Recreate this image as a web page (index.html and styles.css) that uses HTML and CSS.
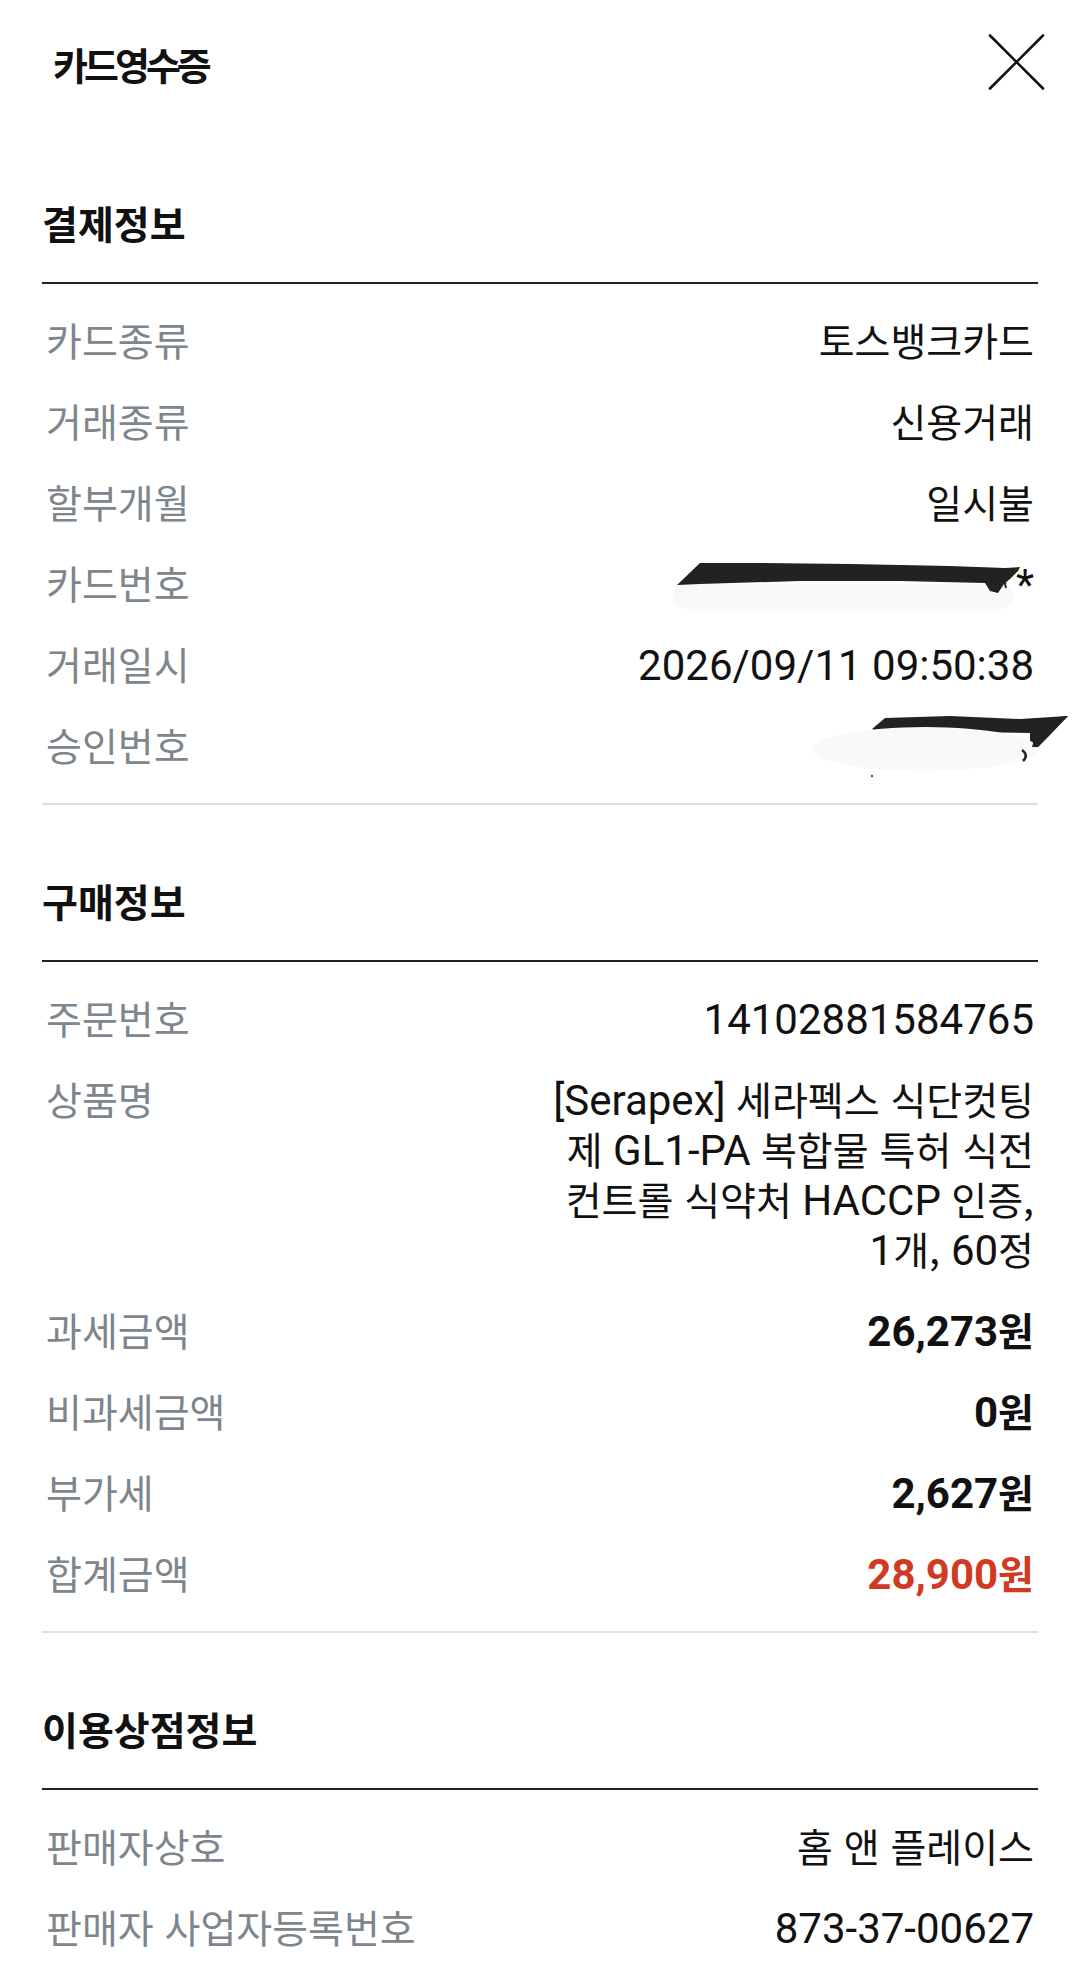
FILE: index.html
```html
<!DOCTYPE html>
<html lang="ko">
<head>
  <meta charset="UTF-8" />
  <meta name="viewport" content="width=device-width, initial-scale=1.0"/>
  <title>카드영수증</title>
  <link rel="stylesheet" href="styles.css">
</head>
<body>
  <header class="top">
    <h1 class="top-title">카드영수증</h1>
    <button class="close" type="button" aria-label="닫기">
      <svg width="60" height="60" viewBox="0 0 60 60">
        <path d="M4 1.5 L57 54.5 M57 1.5 L4 54.5" stroke="#111" stroke-width="2.6" stroke-linecap="round" fill="none"/>
      </svg>
    </button>
  </header>

  <main class="receipt">
    <section class="sec">
      <h2 class="sec-title">결제정보</h2>
      <dl class="rows">
        <div class="row"><dt>카드종류</dt><dd>토스뱅크카드</dd></div>
        <div class="row"><dt>거래종류</dt><dd>신용거래</dd></div>
        <div class="row"><dt>할부개월</dt><dd>일시불</dd></div>
        <div class="row">
          <dt>카드번호</dt>
          <dd><span class="en">*</span></dd>
          <svg class="mask mask-card" width="380" height="70" viewBox="0 0 380 70">
            <rect x="13" y="38" width="340" height="25" rx="12" fill="#f9f9f9"/>
            <path d="M17 39 L40 17 L100 17 L190 18 L290 20 L345 22 L360 21 L358 25 L350 33 L344 38 L338 47 L330 45 L325 37 L240 35 L140 35 L40 38 Z" fill="#222"/>
            <path d="M349 28 Q343 34 346 42" stroke="#222" stroke-width="2" fill="none"/>
          </svg>
        </div>
        <div class="row"><dt>거래일시</dt><dd><span class="en">2026/09/11 09:50:38</span></dd></div>
        <div class="row">
          <dt>승인번호</dt>
          <dd></dd>
          <svg class="mask mask-approval" width="270" height="70" viewBox="0 0 270 70">
            <path d="M72 18 L85 7 L150 5 L220 8 L268 5 L248 25 L236 38 L230 37 L230 22 L160 21 L80 22 Z" fill="#222"/>
            <ellipse cx="125" cy="38" rx="113" ry="22" fill="#f9f9f9"/>
            <path d="M230 9 L268 5 L250 24 L238 36 L232 36 L236 22 Z" fill="#222"/>
            <path d="M222 39 Q229 44 223 50" stroke="#222" stroke-width="2.5" fill="none"/>
            <circle cx="72" cy="65" r="1.2" fill="#555"/>
          </svg>
        </div>
      </dl>
    </section>

    <section class="sec">
      <h2 class="sec-title">구매정보</h2>
      <dl class="rows">
        <div class="row"><dt>주문번호</dt><dd><span class="en">14102881584765</span></dd></div>
        <div class="row">
          <dt>상품명</dt>
          <dd><span class="en">[Serapex] </span>세라펙스 식단컷팅<br>제<span class="en"> GL1-PA </span>복합물 특허 식전<br>컨트롤 식약처<span class="en"> HACCP </span>인증,<br><span class="en">1</span>개, <span class="en">60</span>정</dd>
        </div>
        <div class="row"><dt>과세금액</dt><dd class="amount"><span class="en">26,273</span>원</dd></div>
        <div class="row"><dt>비과세금액</dt><dd class="amount"><span class="en">0</span>원</dd></div>
        <div class="row"><dt>부가세</dt><dd class="amount"><span class="en">2,627</span>원</dd></div>
        <div class="row"><dt>합계금액</dt><dd class="amount total"><span class="en">28,900</span>원</dd></div>
      </dl>
    </section>

    <section class="sec">
      <h2 class="sec-title">이용상점정보</h2>
      <dl class="rows">
        <div class="row"><dt>판매자상호</dt><dd>홈 앤 플레이스</dd></div>
        <div class="row"><dt>판매자 사업자등록번호</dt><dd><span class="en">873-37-00627</span></dd></div>
      </dl>
    </section>
  </main>
</body>
</html>
```

FILE: styles.css
```css
body {
  margin: 0;
  background: #fff;
  color: #111;
  font-family: "Noto Sans CJK KR", sans-serif;
}

.top {
  display: flex;
  align-items: center;
  justify-content: space-between;
  height: 127px;
  padding: 0 34px 0 53px;
}

.top-title {
  margin: 0;
  font-size: 38px;
  font-weight: 700;
  letter-spacing: -4px;
  line-height: 50px;
}

.close {
  border: none;
  background: none;
  padding: 0;
  width: 60px;
  height: 60px;
  cursor: pointer;
}

.close svg {
  display: block;
}

.receipt {
  padding: 0 42px;
}

.sec {
  border-bottom: 2px solid #e0e0e0;
}

.sec:last-child {
  border-bottom: none;
}

.sec-title {
  margin: 0;
  padding: 70px 0 35px;
  font-size: 39px;
  line-height: 50px;
  font-weight: 700;
  border-bottom: 2px solid #222;
}

.rows {
  margin: 0;
  padding: 14px 0 19px;
}

.row {
  position: relative;
  display: flex;
  justify-content: space-between;
  align-items: flex-start;
  gap: 24px;
  padding: 15.5px 4px 15.5px 4px;
  font-size: 39px;
  line-height: 50px;
}

.row dt {
  flex: none;
  color: #7d858d;
}

.row dd {
  margin: 0;
  text-align: right;
  color: #111;
}

.en {
  font-family: Roboto, sans-serif;
  font-size: 42px;
  line-height: 40px;
}

.amount {
  font-weight: 700;
}

.row .total {
  color: #d13a22;
}

/* 가림 처리 */
.mask {
  position: absolute;
  top: 5px;
}

.mask-card {
  right: -2px;
}

.mask-approval {
  top: 8px;
  right: -32px;
}
```
